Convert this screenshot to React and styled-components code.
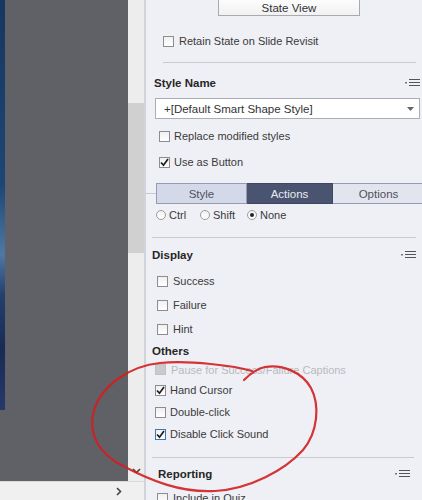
import styled, { createGlobalStyle } from "styled-components";

const GlobalStyle = createGlobalStyle`
  html, body {
    margin: 0;
    padding: 0;
  }
  body {
    font-family: "Liberation Sans", Arial, sans-serif;
  }
`;

const Page = styled.div`
  position: relative;
  display: flex;
  width: 422px;
  height: 500px;
  overflow: hidden;
  background-color: #eff0f5;
`;

const LeftPane = styled.div`
  width: 146px;
  box-sizing: border-box;
  display: flex;
  flex-direction: column;
  border-right: 2px solid #d2d3d8;
`;

const StageRow = styled.div`
  flex: 1;
  display: flex;
  min-height: 0;
`;

const Stage = styled.div`
  flex: 1;
  display: flex;
  background-color: #5f6167;
`;

const BlueEdge = styled.div`
  width: 5px;
  height: 410px;
  background: linear-gradient(
    #173760 0%,
    #1d4676 45%,
    #4f78a6 62%,
    #23406e 72%,
    #1a2a55 85%,
    #28386a 100%
  );
`;

const VScroll = styled.div`
  width: 16px;
  display: flex;
  flex-direction: column;
  align-items: center;
  background-color: #ededed;
`;

const Thumb = styled.div`
  width: 100%;
  height: 150px;
  margin-top: 103px;
  background-color: #d0d0d0;
`;

const ScrollArrow = styled.div`
  margin-top: auto;
  margin-bottom: 7px;
  display: flex;
`;

const HScroll = styled.div`
  height: 19px;
  box-sizing: border-box;
  display: flex;
  align-items: center;
  justify-content: flex-end;
  padding-right: 22px;
  background-color: #f0f0f0;
  border-top: 1px solid #d9d9d9;
`;

const Panel = styled.div`
  flex: 1;
  display: flex;
  flex-direction: column;
  padding-left: 6px;
  overflow: hidden;
  color: #3a3a3a;
  font-size: 11px;
`;

const StateButton = styled.div`
  align-self: flex-start;
  flex-shrink: 0;
  width: 142px;
  height: 21px;
  box-sizing: border-box;
  margin: -5px 0 0 66px;
  padding-top: 5px;
  display: flex;
  align-items: center;
  justify-content: center;
  border: 1px solid #a9a9ae;
  background: linear-gradient(#ffffff, #f1f1f3);
  font-size: 11.5px;
  color: #333;
`;

const Row = styled.div`
  flex-shrink: 0;
  display: flex;
  align-items: center;
  height: ${(p) => p.$h}px;
  margin-top: ${(p) => p.$mt || 0}px;
  margin-left: ${(p) => p.$indent || 0}px;
  gap: ${(p) => p.$gap || 5}px;
  color: ${(p) => (p.$disabled ? "#b9b9bd" : "#3a3a3a")};
  white-space: nowrap;
`;

const Box = styled.span`
  width: 11px;
  height: 11px;
  box-sizing: border-box;
  display: flex;
  align-items: center;
  justify-content: center;
  border: 1px solid ${(p) => (p.$focus ? "#3d78b4" : p.$disabled ? "#c2c2c6" : "#8c8c92")};
  background: ${(p) => (p.$disabled ? "#cacacd" : "linear-gradient(#f0f0f2, #ffffff)")};
`;

const Separator = styled.div`
  flex-shrink: 0;
  height: 1px;
  margin: ${(p) => p.$mt}px ${(p) => p.$right}px 0 ${(p) => p.$left}px;
  background-color: #c9cad0;
`;

const Header = styled.div`
  flex-shrink: 0;
  display: flex;
  align-items: center;
  justify-content: space-between;
  height: ${(p) => p.$h}px;
  margin-top: ${(p) => p.$mt || 0}px;
  margin-left: ${(p) => p.$indent || 0}px;
  padding-right: ${(p) => p.$pr || 0}px;
  font-size: 11.5px;
  font-weight: bold;
  color: #262626;
`;

const Dropdown = styled.div`
  flex-shrink: 0;
  height: 21px;
  box-sizing: border-box;
  margin: 5px 2px 0 3px;
  padding: 0 5px 0 8px;
  display: flex;
  align-items: center;
  justify-content: space-between;
  border: 1px solid #abadb5;
  background-color: #ffffff;
  color: #333;
  font-size: 11.5px;
`;

const Tabs = styled.div`
  position: relative;
  flex-shrink: 0;
  display: flex;
  height: 21px;
  margin: 11px 0 0 4px;

  &::before {
    content: "";
    position: absolute;
    left: -10px;
    top: 10px;
    width: 10px;
    height: 1px;
    background-color: #c9cad0;
  }
`;

const Tab = styled.div`
  flex-shrink: 0;
  width: ${(p) => p.$w}px;
  box-sizing: border-box;
  display: flex;
  align-items: center;
  justify-content: center;
  font-size: 11.5px;
  border: 1px solid ${(p) => (p.$active ? "#3f4862" : "#959bb1")};
  border-left-width: ${(p) => (p.$first ? 1 : 0)}px;
  background-color: ${(p) => (p.$active ? "#4a5471" : p.$first ? "#d4d9ea" : "#e3e5ee")};
  color: ${(p) => (p.$active ? "#e8eaf2" : "#50505c")};
`;

const RadioRow = styled.div`
  flex-shrink: 0;
  display: flex;
  align-items: center;
  height: 16px;
  margin: 3px 0 0 4px;
  color: #3a3a3a;
`;

const RadioItem = styled.label`
  display: flex;
  align-items: center;
  gap: 3px;
  width: ${(p) => (p.$w ? `${p.$w}px` : "auto")};
`;

const RadioDot = styled.span`
  width: 10px;
  height: 10px;
  box-sizing: border-box;
  border-radius: 50%;
  border: 1px solid #9c9ca2;
  background: linear-gradient(#f2f2f4, #ffffff);
  display: flex;
  align-items: center;
  justify-content: center;
  &::after {
    content: "";
    width: 4px;
    height: 4px;
    border-radius: 50%;
    background-color: ${(p) => (p.$on ? "#222" : "transparent")};
  }
`;

const Overlay = styled.svg`
  position: absolute;
  left: 0;
  top: 0;
  pointer-events: none;
`;

const MenuIcon = () => (
  <svg width="15" height="10" viewBox="0 0 15 10">
    <rect x="0" y="4" width="2" height="1.5" fill="#777" />
    <g stroke="#555" strokeWidth="1">
      <line x1="4" y1="1.5" x2="15" y2="1.5" />
      <line x1="4" y1="4.5" x2="15" y2="4.5" />
      <line x1="4" y1="7.5" x2="15" y2="7.5" />
    </g>
  </svg>
);

const CheckBox = ({ checked, focus, disabled }) => (
  <Box $focus={focus} $disabled={disabled}>
    {checked && (
      <svg width="9" height="9" viewBox="0 0 9 9">
        <path d="M1 4.5 L3.5 7.2 L8 1" fill="none" stroke="#1e1e1e" strokeWidth="1.7" />
      </svg>
    )}
  </Box>
);

const Check = ({ label, h, mt, indent, gap, ...rest }) => (
  <Row $h={h} $mt={mt} $indent={indent} $gap={gap} $disabled={rest.disabled}>
    <CheckBox {...rest} />
    <span>{label}</span>
  </Row>
);

const App = () => {
  return (
    <>
      <GlobalStyle />
      <Page>
        <LeftPane>
          <StageRow>
            <Stage>
              <BlueEdge />
            </Stage>
            <VScroll>
              <Thumb />
              <ScrollArrow>
                <svg width="9" height="6" viewBox="0 0 9 6">
                  <path d="M1 1 L4.5 4.5 L8 1" fill="none" stroke="#444" strokeWidth="1.6" />
                </svg>
              </ScrollArrow>
            </VScroll>
          </StageRow>
          <HScroll>
            <svg width="6" height="9" viewBox="0 0 6 9">
              <path d="M1 1 L4.5 4.5 L1 8" fill="none" stroke="#444" strokeWidth="1.6" />
            </svg>
          </HScroll>
        </LeftPane>

        <Panel>
          <StateButton>State View</StateButton>
          <Check label="Retain State on Slide Revisit" h={22} mt={14} indent={11} />
          <Separator $mt={10} $left={11} $right={6} />

          <Header $h={20} $mt={10} $indent={2} $pr={2}>
            <span>Style Name</span>
            <MenuIcon />
          </Header>
          <Dropdown>
            <span>+[Default Smart Shape Style]</span>
            <svg width="7" height="4" viewBox="0 0 7 4">
              <path d="M0 0 L7 0 L3.5 4 Z" fill="#666" />
            </svg>
          </Dropdown>
          <Check label="Replace modified styles" h={20} mt={7} indent={7} gap={4} />
          <Check label="Use as Button" checked h={20} mt={6} indent={7} gap={4} />

          <Tabs>
            <Tab $w={91} $first>Style</Tab>
            <Tab $w={86} $active>Actions</Tab>
            <Tab $w={92}>Options</Tab>
          </Tabs>
          <RadioRow>
            <RadioItem $w={44}>
              <RadioDot />
              Ctrl
            </RadioItem>
            <RadioItem $w={47}>
              <RadioDot />
              Shift
            </RadioItem>
            <RadioItem>
              <RadioDot $on />
              None
            </RadioItem>
          </RadioRow>
          <Separator $mt={14} $left={0} $right={6} />

          <Header $h={20} $mt={7} $pr={6}>
            <span>Display</span>
            <MenuIcon />
          </Header>
          <Check label="Success" h={24} mt={4} indent={5} />
          <Check label="Failure" h={24} indent={5} />
          <Check label="Hint" h={24} indent={5} />

          <Header $h={19}>
            <span>Others</span>
          </Header>
          <Check label="Pause for Success/Failure Captions" disabled h={19} indent={3} gap={5} />
          <Check label="Hand Cursor" checked h={22} indent={3} gap={4} />
          <Check label="Double-click" h={22} indent={3} gap={4} />
          <Check label="Disable Click Sound" checked focus h={22} indent={3} gap={4} />
          <Separator $mt={12} $left={0} $right={8} />

          <Header $h={18} $mt={7} $indent={6} $pr={12}>
            <span>Reporting</span>
            <MenuIcon />
          </Header>
          <Check label="Include in Quiz" h={22} mt={4} indent={5} />
        </Panel>

        <Overlay width="422" height="500" viewBox="0 0 422 500">
          <path
            d="M252 371 C235 366 190 360 160 363 C130 366 102 385 94 410 C87 435 100 455 125 467 C150 480 180 493 215 491 C250 489 285 470 303 450 C318 432 320 405 311 388 C302 372 282 364 265 367 C255 369 248 376 244 380"
            fill="none"
            stroke="#d11f1f"
            strokeWidth="2.2"
            strokeLinecap="round"
            opacity="0.9"
          />
        </Overlay>
      </Page>
    </>
  );
};

export default App;
